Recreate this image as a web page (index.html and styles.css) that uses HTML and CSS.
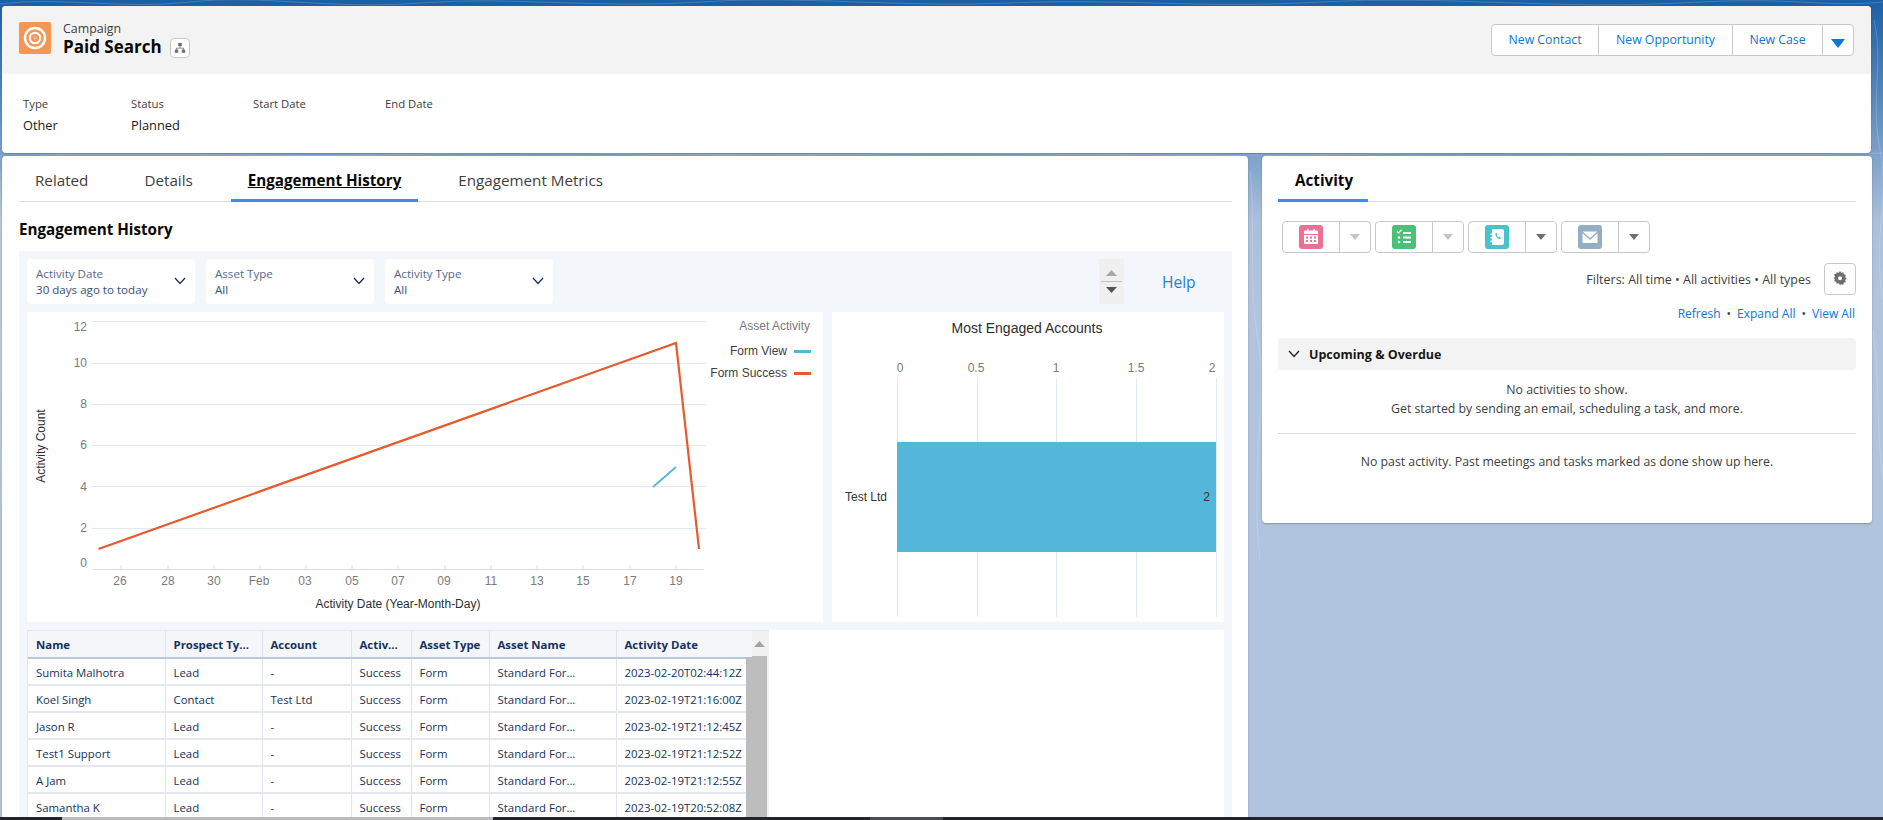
FILE: index.html
```html
<!DOCTYPE html>
<html lang="en">
<head>
<meta charset="utf-8">
<title>Paid Search | Campaign</title>
<link rel="stylesheet" href="styles.css">
</head>
<body>
<svg class="wallpaper" viewBox="0 0 1883 820" width="1883" height="820" aria-hidden="true">
  <path d="M0 4C60 -4 120 10 190 2S330 10 420 3 600 9 700 2 900 8 1010 3 1200 9 1320 2 1560 10 1680 3 1820 8 1883 2"/>
  <path d="M1874 20C1884 60 1870 100 1880 150S1872 240 1883 300M1873 330C1880 380 1876 430 1883 480"/>
  <path d="M40 155C160 152 300 158 420 154S700 157 860 154 1180 158 1360 154 1700 157 1883 153"/>
  <path d="M1250 170C1256 220 1248 290 1258 340S1250 470 1260 560M0 170C2 260 0 390 2 520"/>
</svg>
<div class="page">
  <header class="record">
    <div class="record-top">
      <div class="title-block">
        <svg class="record-icon" viewBox="0 0 32 32"><rect width="32" height="32" rx="2" fill="#f49756"/><circle cx="16" cy="16" r="10" fill="none" stroke="#fff" stroke-width="2.400"/><circle cx="16" cy="16" r="5.200" fill="none" stroke="#fff" stroke-width="2.200"/><circle cx="16" cy="16" r="1.600" fill="#fff" fill-opacity=".35"/></svg>
        <div class="title-text">
          <div class="entity">Campaign</div>
          <div class="title-row">
            <h1 class="record-name">Paid Search</h1>
            <span class="hier-btn"><svg viewBox="0 0 12 12" width="12" height="12"><g fill="#706e6b"><rect x="4.200" y="1" width="3.600" height="3.200"/><rect x="0.800" y="7.600" width="3.400" height="3.200"/><rect x="7.800" y="7.600" width="3.400" height="3.200"/><path d="M5.600 4.200h.8v1.500h3.500v2h-.8V6.500H3v1.200h-.8v-2h3.400z"/></g></svg></span>
          </div>
        </div>
      </div>
      <div class="btn-group">
        <span class="btn btn-contact">New Contact</span>
        <span class="btn btn-opp">New Opportunity</span>
        <span class="btn btn-case">New Case</span>
        <span class="btn btn-more"><svg viewBox="0 0 14 9" width="14" height="9"><path d="M0 0h14L7 9z" fill="#0b76d8"/></svg></span>
      </div>
    </div>
    <div class="fields">
      <div class="field f-type"><div class="field-label">Type</div><div class="field-value">Other</div></div>
      <div class="field f-status"><div class="field-label">Status</div><div class="field-value">Planned</div></div>
      <div class="field f-start"><div class="field-label">Start Date</div></div>
      <div class="field f-end"><div class="field-label">End Date</div></div>
    </div>
  </header>

  <div class="columns">
    <main class="card left-card">
      <nav class="tabs">
        <span class="tab">Related</span>
        <span class="tab">Details</span>
        <span class="tab tab-active tab-history">Engagement History</span>
        <span class="tab">Engagement Metrics</span>
      </nav>
      <h2 class="section-title">Engagement History</h2>
      <section class="dash">
        <div class="filters">
          <div class="filter"><div><div class="filter-label">Activity Date</div><div class="filter-value">30 days ago to today</div></div><svg class="chev" viewBox="0 0 12 8"><path d="M1 1l5 5.500L11 1" fill="none" stroke="#16325c" stroke-width="1.300"/></svg></div>
          <div class="filter"><div><div class="filter-label">Asset Type</div><div class="filter-value">All</div></div><svg class="chev" viewBox="0 0 12 8"><path d="M1 1l5 5.500L11 1" fill="none" stroke="#16325c" stroke-width="1.300"/></svg></div>
          <div class="filter"><div><div class="filter-label">Activity Type</div><div class="filter-value">All</div></div><svg class="chev" viewBox="0 0 12 8"><path d="M1 1l5 5.500L11 1" fill="none" stroke="#16325c" stroke-width="1.300"/></svg></div>
          <div class="stepper">
            <svg viewBox="0 0 11 6" width="11" height="6"><path d="M0 6h11L5.500 0z" fill="#a8a8a8"/></svg>
            <span class="stepper-line"></span>
            <svg viewBox="0 0 11 6" width="11" height="6"><path d="M0 0h11L5.500 6z" fill="#555"/></svg>
          </div>
          <a class="help">Help</a>
        </div>
        <div class="charts">
          <svg class="chart" viewBox="0 0 796 310" width="796" height="310">
            <g class="grid">
              <path d="M65 9.500H679M65 51.500H679M65 92.500H679M65 133.500H679M65 174.500H679M65 216.500H679"/>
            </g>
            <path class="axis" d="M66 257.500H677M94 253v4M141 253v4M187 253v4M233 253v4M279 253v4M325 253v4M371 253v4M418 253v4M464 253v4M510 253v4M556 253v4M603 253v4M649 253v4"/>
            <g class="tick-y">
              <text x="60" y="19">12</text><text x="60" y="55">10</text><text x="60" y="96">8</text><text x="60" y="137">6</text><text x="60" y="179">4</text><text x="60" y="220">2</text><text x="60" y="255">0</text>
            </g>
            <g class="tick-x">
              <text x="93" y="273">26</text><text x="141" y="273">28</text><text x="187" y="273">30</text><text x="232" y="273">Feb</text><text x="278" y="273">03</text><text x="325" y="273">05</text><text x="371" y="273">07</text><text x="417" y="273">09</text><text x="464" y="273">11</text><text x="510" y="273">13</text><text x="556" y="273">15</text><text x="603" y="273">17</text><text x="649" y="273">19</text>
            </g>
            <text class="axis-title" x="371" y="296">Activity Date (Year-Month-Day)</text>
            <text class="axis-title" transform="translate(18 134) rotate(-90)">Activity Count</text>
            <polyline class="line-orange" points="71.500,237 649,31 672,237"/>
            <polyline class="line-blue" points="626,175 649,155"/>
            <text class="legend-title" x="783" y="18">Asset Activity</text>
            <text class="legend" x="760" y="43">Form View</text>
            <rect x="767" y="38" width="17" height="3" fill="#54b6d9"/>
            <text class="legend" x="760" y="65">Form Success</text>
            <rect x="767" y="60" width="17" height="3" fill="#e65a2e"/>
          </svg>
          <svg class="chart" viewBox="0 0 392 310" width="392" height="310">
            <text class="bar-title" x="195" y="21">Most Engaged Accounts</text>
            <g class="tick-x">
              <text x="68" y="60">0</text><text x="144" y="60">0.5</text><text x="224" y="60">1</text><text x="304" y="60">1.5</text><text x="380" y="60">2</text>
            </g>
            <path class="bar-grid" d="M65.500 66V305M145.500 66V305M224.500 66V305M304.500 66V305M384.500 66V305"/>
            <rect x="65" y="130" width="319" height="110" fill="#54b6d9"/>
            <text class="bar-label" x="55" y="189">Test Ltd</text>
            <text class="bar-label" x="378" y="189">2</text>
          </svg>
        </div>
        <div class="table-row">
          <div class="table-wrap">
            <table class="data">
              <thead><tr><th class="c1">Name</th><th class="c2">Prospect Ty...</th><th class="c3">Account</th><th class="c4">Activ...</th><th class="c5">Asset Type</th><th class="c6">Asset Name</th><th class="c7">Activity Date</th></tr></thead>
              <tbody>
                <tr><td>Sumita Malhotra</td><td>Lead</td><td>-</td><td>Success</td><td>Form</td><td>Standard For...</td><td>2023-02-20T02:44:12Z</td></tr>
                <tr><td>Koel Singh</td><td>Contact</td><td>Test Ltd</td><td>Success</td><td>Form</td><td>Standard For...</td><td>2023-02-19T21:16:00Z</td></tr>
                <tr><td>Jason R</td><td>Lead</td><td>-</td><td>Success</td><td>Form</td><td>Standard For...</td><td>2023-02-19T21:12:45Z</td></tr>
                <tr><td>Test1 Support</td><td>Lead</td><td>-</td><td>Success</td><td>Form</td><td>Standard For...</td><td>2023-02-19T21:12:52Z</td></tr>
                <tr><td>A Jam</td><td>Lead</td><td>-</td><td>Success</td><td>Form</td><td>Standard For...</td><td>2023-02-19T21:12:55Z</td></tr>
                <tr><td>Samantha K</td><td>Lead</td><td>-</td><td>Success</td><td>Form</td><td>Standard For...</td><td>2023-02-19T20:52:08Z</td></tr>
              </tbody>
            </table>
            <div class="vscroll"><svg class="vscroll-up" viewBox="0 0 11 6" width="11" height="6"><path d="M0 6h11L5.500 0z" fill="#a3a3a3"/></svg><div class="vscroll-thumb"></div></div>
          </div>
        </div>
      </section>
    </main>

    <aside class="card right-card">
      <nav class="tabs tabs-right"><span class="tab tab-active tab-activity">Activity</span></nav>
      <div class="actions">
        <div class="action"><span class="action-main"><svg viewBox="0 0 24 24" width="24" height="24"><rect width="24" height="24" rx="3" fill="#eb7092"/><g fill="#fff"><path d="M8 4h1.600v2H8zM14.400 4H16v2h-1.600z"/><path d="M6 5.500h12a1 1 0 0 1 1 1V9H5V6.500a1 1 0 0 1 1-1zM5 10h14v8a1 1 0 0 1-1 1H6a1 1 0 0 1-1-1z"/></g><g fill="#eb7092"><rect x="7" y="11.500" width="2" height="2"/><rect x="11" y="11.500" width="2" height="2"/><rect x="15" y="11.500" width="2" height="2"/><rect x="7" y="15" width="2" height="2"/><rect x="11" y="15" width="2" height="2"/><rect x="15" y="15" width="2" height="2"/></g></svg></span><span class="action-drop"><svg viewBox="0 0 10 6" width="10" height="6"><path d="M0 0h10L5 6z" fill="#c4c4c4"/></svg></span></div>
        <div class="action"><span class="action-main"><svg viewBox="0 0 24 24" width="24" height="24"><rect width="24" height="24" rx="3" fill="#4bc076"/><g fill="#fff"><rect x="11" y="7" width="8" height="2"/><rect x="11" y="11.500" width="8" height="2"/><rect x="11" y="16" width="8" height="2"/><circle cx="7" cy="12.500" r="1.300"/><circle cx="7" cy="17" r="1.300"/></g><path d="M5 6.500l1.500 1.500L9.500 4.800" fill="none" stroke="#fff" stroke-width="1.300"/></svg></span><span class="action-drop"><svg viewBox="0 0 10 6" width="10" height="6"><path d="M0 0h10L5 6z" fill="#c4c4c4"/></svg></span></div>
        <div class="action"><span class="action-main"><svg viewBox="0 0 24 24" width="24" height="24"><rect width="24" height="24" rx="3" fill="#48c3cc"/><path d="M8 4h9a2 2 0 0 1 2 2v12a2 2 0 0 1-2 2H8a1 1 0 0 1-1-1v-2H5.500v-1.500H7v-2H5.500V12H7v-2H5.500V8.500H7V5a1 1 0 0 1 1-1z" fill="#fff"/><path d="M11 8c-.6.300-.8.900-.6 1.700.5 1.900 1.700 3.300 3.300 4.100.8.300 1.400.2 1.800-.4l.4-.7-1.700-1.200-.7.700c-.8-.5-1.300-1.100-1.600-1.900l.7-.6L11.600 7.900z" fill="#48c3cc"/></svg></span><span class="action-drop"><svg viewBox="0 0 10 6" width="10" height="6"><path d="M0 0h10L5 6z" fill="#706e6b"/></svg></span></div>
        <div class="action"><span class="action-main"><svg viewBox="0 0 24 24" width="24" height="24"><rect width="24" height="24" rx="3" fill="#95aec5"/><path d="M5.500 6.500h13a1 1 0 0 1 .7.300L12 13 4.800 6.800a1 1 0 0 1 .7-.3z" fill="#fff"/><path d="M4.500 8.200L12 14.700l7.500-6.500V17a1 1 0 0 1-1 1h-13a1 1 0 0 1-1-1z" fill="#fff"/><path d="M4.500 7.500L12 14l7.500-6.500" fill="none" stroke="#95aec5" stroke-width=".8"/></svg></span><span class="action-drop"><svg viewBox="0 0 10 6" width="10" height="6"><path d="M0 0h10L5 6z" fill="#706e6b"/></svg></span></div>
      </div>
      <div class="filter-line">
        <span class="filter-text">Filters: All time • All activities • All types</span>
        <span class="gear"><svg viewBox="0 0 14 14" width="14" height="14"><path fill="#706e6b" fill-rule="evenodd" d="M7 0l1.300 1.700 2.100-.5.400 2.100 2.100.6-.8 2 1.500 1.600-1.500 1.600.8 2-2.100.6-.4 2.100-2.100-.5L7 14l-1.300-1.700-2.100.5-.4-2.100-2.100-.6.8-2L.4 7.500 1.900 6.100l-.8-2.800 2.100-.6.4-1.500 2.100.5zM7 5.200a2 2 0 1 0 0 4 2 2 0 0 0 0-4z"/></svg></span>
      </div>
      <div class="links"><a>Refresh</a><span class="dot">•</span><a>Expand All</a><span class="dot">•</span><a>View All</a></div>
      <div class="upcoming"><svg viewBox="0 0 12 8" width="12" height="8"><path d="M1 1l5 5.500L11 1" fill="none" stroke="#222" stroke-width="1.300"/></svg><span>Upcoming &amp; Overdue</span></div>
      <div class="empty">No activities to show.<br>Get started by sending an email, scheduling a task, and more.</div>
      <div class="past">No past activity. Past meetings and tasks marked as done show up here.</div>
    </aside>
  </div>
</div>
<div class="taskbar"><span class="tb-hscroll"></span><span class="tb-active"></span></div>
</body>
</html>
```
FILE: styles.css
```css
* { box-sizing: border-box; }
html, body { margin: 0; height: 820px; overflow: hidden; }
body {
  font-family: "Open Sans", "Noto Sans", sans-serif;
  font-size: 12.3px;
  color: #080707;
  background: linear-gradient(180deg, #1b5fa6 0, #5f8dbd 110px, #a9c0dc 220px, #b0c4df 300px);
  position: relative;
}
a { color: #0b76d8; }
.wallpaper { position: absolute; left: 0; top: 0; }
.wallpaper path { fill: none; stroke: #fff; stroke-opacity: .18; stroke-width: 1; }
.page { position: relative; padding: 6px 0 0 2px; }

/* record header */
.record { width: 1869px; height: 147px; background: #fff; border-radius: 4px; overflow: hidden; box-shadow: 0 1px 2px rgba(0,0,0,.2); }
.record-top { height: 68px; background: #f3f3f3; display: flex; justify-content: space-between; padding: 16px 17px 0 17px; }
.title-block { display: flex; gap: 12px; }
.record-icon { width: 32px; height: 32px; }
.title-text { margin-top: -1px; }
.entity { font-size: 12.4px; line-height: 16px; color: #3e3e3c; }
.title-row { display: flex; align-items: center; gap: 8px; margin-top: -1px; }
.record-name { margin: 0; font-size: 17px; font-weight: 700; line-height: 22px; }
.hier-btn { width: 20px; height: 20px; border: 1px solid #c9c9c9; border-radius: 4px; background: #fff; display: flex; align-items: center; justify-content: center; margin-top: 1px; }
.btn-group { display: flex; height: 32px; margin-top: 2px; background: #fff; border: 1px solid #c9c9c9; border-radius: 4px; }
.btn { display: flex; align-items: center; justify-content: center; color: #0b76d8; font-size: 12.3px; border-right: 1px solid #c9c9c9; padding-bottom: 2px; }
.btn-contact { width: 107px; }
.btn-opp { width: 134px; }
.btn-case { width: 90px; }
.btn-more { width: 30px; border-right: 0; padding: 6px 0 0; }
.fields { display: flex; padding: 21px 0 0 21px; }
.field-label { font-size: 11.3px; line-height: 18px; color: #3e3e3c; }
.field-value { font-size: 12.8px; line-height: 20px; margin-top: 2px; color: #181818; }
.f-type { width: 108px; }
.f-status { width: 122px; }
.f-start { width: 132px; }

/* columns */
.columns { display: grid; grid-template-columns: 1246px 610px; column-gap: 14px; margin-top: 3px; align-items: start; }
.card { background: #fff; border-radius: 4px; box-shadow: 0 1px 2px rgba(0,0,0,.25); }
.left-card { height: 670px; padding: 0 16px 0 17px; overflow: hidden; }
.right-card { height: 367px; padding: 0 16px; }

/* tabs */
.tabs { display: flex; gap: 24px; height: 46px; border-bottom: 1px solid #dddbda; }
.tab { padding: 0 16px; height: 46px; line-height: 49px; font-size: 15.2px; color: #3e3e3c; }
.tab-active { padding: 0 17px; font-weight: 700; color: #080707; text-decoration: underline; border-bottom: 3px solid #3c8cf0; }
.tab-history { margin-left: -2px; }
.tab-activity { text-decoration: none; padding: 0 15px 0 17px; }
.section-title { margin: 0; font-size: 15.2px; font-weight: 700; line-height: 20px; padding-top: 17px; height: 49px; }

/* dashboard */
.dash { background: #f3f6fa; padding: 8px; height: 580px; }
.filters { display: flex; gap: 11px; height: 45px; align-items: stretch; }
.filter { width: 168px; background: #fff; border-radius: 4px; padding: 7px 9px 0 9px; display: flex; justify-content: space-between; font-size: 11.6px; line-height: 16px; }
.filter-label { color: #54698d; }
.filter-value { color: #3a5073; }
.chev { width: 12px; height: 8px; margin-top: 11px; }
.stepper { width: 25px; margin-left: 535px; background: #f0f0f0; display: flex; flex-direction: column; align-items: center; justify-content: center; gap: 5px; }
.stepper-line { width: 21px; height: 1px; background: #c4c4c4; }
.help { font-size: 15.5px; align-self: center; margin-left: 27px; color: #1b82e0; }
.charts { display: flex; gap: 9px; margin-top: 8px; }
.chart { display: block; background: #fff; font-family: "Liberation Sans", Arial, sans-serif; }
.grid path { stroke: #e3e9f1; stroke-width: 1; fill: none; }
.axis { stroke: #d5dcea; stroke-width: 1; fill: none; }
.tick-y text { font-size: 12px; fill: #7a7a7a; text-anchor: end; }
.tick-x text { font-size: 12px; fill: #7a7a7a; text-anchor: middle; }
.axis-title { font-size: 12px; fill: #2e2e2e; text-anchor: middle; }
.line-orange { fill: none; stroke: #e65a2e; stroke-width: 2.2; }
.line-blue { fill: none; stroke: #54b6d9; stroke-width: 1.8; }
.legend-title { font-size: 12px; fill: #7a7a7a; text-anchor: end; }
.legend { font-size: 12px; fill: #3e3e3e; text-anchor: end; }
.bar-title { font-size: 14px; fill: #2e2e2e; text-anchor: middle; }
.bar-grid { stroke: #e3e9f1; stroke-width: 1; fill: none; }
.bar-label { font-size: 12px; fill: #333; text-anchor: end; }

/* table */
.table-row { margin-top: 8px; background: #fff; height: 200px; }
.table-wrap { width: 742px; height: 200px; position: relative; border-top: 1px solid #e0e5ee; border-left: 1px solid #e0e5ee; border-right: 2px solid #edf0f4; }
.data { border-collapse: collapse; table-layout: fixed; width: 724px; font-size: 11.4px; color: #16325c; }
.data th { height: 27px; background: #f4f6f9; text-align: left; font-weight: 700; padding: 0 0 0 8px; border-right: 1px solid #dfe4ec; border-bottom: 2px solid #b9c8db; white-space: nowrap; overflow: hidden; position: relative; z-index: 2; }
.data td { height: 27px; padding: 2px 0 0 8px; border-right: 1px solid #dfe4ec; border-bottom: 2px solid #e3e7ee; white-space: nowrap; overflow: hidden; background: #fff; }
.data th:last-child, .data td:last-child { border-right: 0; }
.c1 { width: 137px; }
.c2 { width: 97px; }
.c3 { width: 89px; }
.c4 { width: 60px; }
.c5 { width: 78px; }
.c6 { width: 127px; }
.c7 { width: 136px; }
.vscroll { position: absolute; left: 724px; right: 0; top: 0; bottom: 0; background: #f1f1f1; display: flex; flex-direction: column; align-items: center; }
.vscroll-up { margin-top: 10px; }
.vscroll-thumb { position: absolute; top: 25px; left: -6px; right: 0; bottom: 0; background: #bdbdbd; }

/* right card */
.actions { display: flex; gap: 4px; padding: 19px 0 0 4px; height: 64px; }
.action { width: 89px; height: 32px; display: flex; background: #fff; border: 1px solid #c9c9c9; border-radius: 4px; }
.action-main { width: 57px; display: flex; align-items: center; justify-content: center; border-right: 1px solid #c9c9c9; }
.action-drop { flex: 1; display: flex; align-items: center; justify-content: center; }
.filter-line { display: flex; justify-content: flex-end; align-items: center; gap: 13px; margin-top: -3px; height: 32px; font-size: 12.5px; color: #3e3e3c; }
.gear { width: 32px; height: 32px; border: 1px solid #c9c9c9; border-radius: 4px; background: #fff; display: flex; align-items: center; justify-content: center; padding-bottom: 2px; }
.links { display: flex; justify-content: flex-end; gap: 6px; margin-top: 9px; height: 20px; font-size: 12px; line-height: 20px; color: #3e3e3c; padding-right: 1px; }
.upcoming { margin-top: 14px; height: 32px; background: #f3f3f3; border-radius: 4px; display: flex; align-items: center; gap: 9px; padding: 0 0 0 10px; font-size: 12.5px; font-weight: 700; color: #181818; }
.empty { text-align: center; line-height: 19px; padding-top: 10px; height: 64px; border-bottom: 1px solid #dddbda; font-size: 12.3px; color: #3e3e3c; }
.past { text-align: center; padding-top: 19px; font-size: 12.3px; color: #3e3e3c; }

/* window strip at the bottom */
.taskbar { position: absolute; left: 0; right: 0; top: 817px; height: 3px; background: #22242c; }
.tb-hscroll { position: absolute; left: 62px; width: 431px; top: 0; bottom: 0; background: #bbb; }
.tb-active { position: absolute; left: 870px; width: 73px; top: 0; bottom: 0; background: #4a4a52; }
```
